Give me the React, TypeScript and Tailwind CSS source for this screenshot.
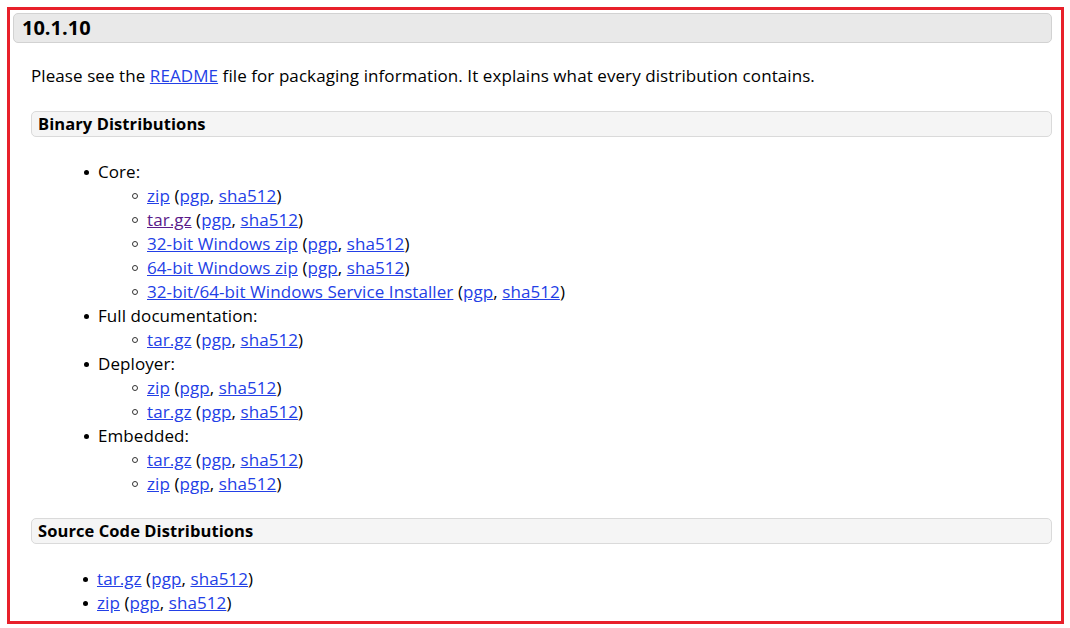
import React from 'react';

type Sub = { label: string; visited?: boolean };

const A = ({ children, visited }: { children: React.ReactNode; visited?: boolean }) => (
  <a href="#" className={`underline ${visited ? 'text-[#5a1a8a]' : 'text-[#2340e6]'}`}>
    {children}
  </a>
);

const Dl = ({ label, visited }: Sub) => (
  <>
    <A visited={visited}>{label}</A> (<A>pgp</A>, <A>sha512</A>)
  </>
);

const Disc = () => <span className="mr-[9px] inline-block h-[5px] w-[5px] shrink-0 rounded-full bg-black" />;
const Circle = () => (
  <span className="mr-[9px] inline-block h-[6px] w-[6px] shrink-0 rounded-full border border-[#333]" />
);

const binary: Array<{ title: string; items: Sub[] }> = [
  {
    title: 'Core:',
    items: [
      { label: 'zip' },
      { label: 'tar.gz', visited: true },
      { label: '32-bit Windows zip' },
      { label: '64-bit Windows zip' },
      { label: '32-bit/64-bit Windows Service Installer' },
    ],
  },
  { title: 'Full documentation:', items: [{ label: 'tar.gz' }] },
  { title: 'Deployer:', items: [{ label: 'zip' }, { label: 'tar.gz' }] },
  { title: 'Embedded:', items: [{ label: 'tar.gz' }, { label: 'zip' }] },
];

function SubHeading({ children }: { children: React.ReactNode }) {
  return (
    <h3 className="flex h-[26px] items-center rounded-[5px] border border-[#dadada] bg-[#f5f5f5] pl-[6px] text-[16.5px] font-bold text-black">
      {children}
    </h3>
  );
}

export default function App() {
  return (
    <div className="h-[628px] w-[1070px] bg-white p-[7px] text-[17px] leading-[24px] tracking-[0.08px] text-black" style={{ fontFamily: '"Open Sans", sans-serif' }}>
      <div className="h-[617px] w-[1057px] overflow-hidden border-[3px] border-[#e8202a] pl-[3px] pr-[9px] pt-[3px]">
        <h2 className="flex h-[30px] items-center rounded-[5px] border border-[#d2d2d2] bg-[#e9e9e9] pl-[8px] text-[20px] font-bold tracking-normal">
          10.1.10
        </h2>
        <div className="pl-[18px]">
          <p className="mt-[21px]">
            Please see the <A>README</A> file for packaging information. It explains what every distribution contains.
          </p>
          <div className="mt-[23px]">
            <SubHeading>Binary Distributions</SubHeading>
          </div>
          <ul className="mt-[23px] pl-[53px]">
            {binary.map((group) => (
              <li key={group.title}>
                <div className="flex items-center">
                  <Disc />
                  <span>{group.title}</span>
                </div>
                <ul className="pl-[48px]">
                  {group.items.map((it, i) => (
                    <li key={i} className="flex items-center whitespace-nowrap">
                      <Circle />
                      <span>
                        <Dl {...it} />
                      </span>
                    </li>
                  ))}
                </ul>
              </li>
            ))}
          </ul>
          <div className="mt-[22px]">
            <SubHeading>Source Code Distributions</SubHeading>
          </div>
          <ul className="mt-[23px] pl-[52px]">
            {['tar.gz', 'zip'].map((l) => (
              <li key={l} className="flex items-center">
                <Disc />
                <span>
                  <Dl label={l} />
                </span>
              </li>
            ))}
          </ul>
        </div>
      </div>
    </div>
  );
}
